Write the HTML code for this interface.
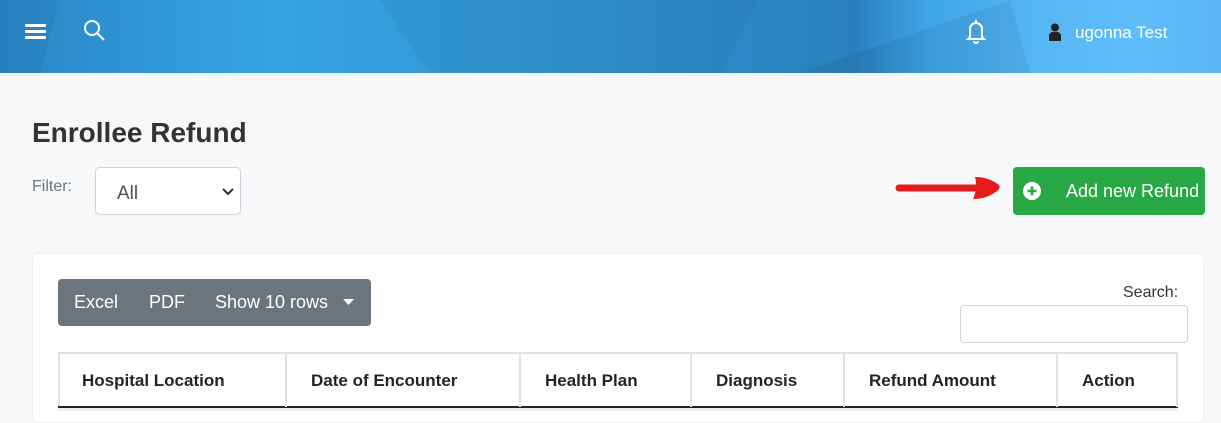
<!DOCTYPE html>
<html><head><meta charset="utf-8"><style>
*{box-sizing:border-box;margin:0;padding:0}
body{width:1221px;height:411px;overflow:hidden;background:#f7f8fa;font-family:"Liberation Sans",sans-serif;position:relative;color:#212529}
.top{position:absolute;left:0;top:0;width:1221px;height:73px;background:linear-gradient(90deg,#2a86c6 0%,#35a3e3 22%,#3399d6 38%,#2d8cc8 55%,#2a80bd 70%,#3ea5e6 76%,#55b6f4 85%,#60bdfb 93%,#58b5f2 100%);overflow:hidden}
.ab{position:absolute}
.th{position:absolute;top:352px;height:55px;border-right:2px solid #dee2e6;font-weight:bold;font-size:17px;line-height:58px;padding-left:24px}
</style></head><body>
<div class="top">
 <svg class="ab" style="left:0;top:0" width="1221" height="73">
  <polygon points="0,0 60,0 40,73 0,73" fill="#1f6fa8" opacity=".25"/>
  <polygon points="380,0 760,0 720,73 430,73" fill="#000" opacity=".04"/>
  <polygon points="800,73 1010,0 1030,73" fill="#000" opacity=".06"/>
 </svg>
 <svg class="ab" style="left:25px;top:23px" width="21" height="16"><rect y="1" width="21" height="3" rx="1" fill="#fff"/><rect y="7" width="21" height="3" rx="1" fill="#fff"/><rect y="13" width="21" height="3" rx="1" fill="#fff"/></svg>
 <svg class="ab" style="left:83px;top:19px" width="24" height="24" fill="none" stroke="#fff" stroke-width="2"><circle cx="9" cy="9" r="7"/><path d="M14 14l7 7"/></svg>
 <svg class="ab" style="left:964px;top:18px" width="24" height="27" fill="none" stroke="#fff" stroke-width="2"><path d="M12 2v2M6 19V11a6 6 0 0 1 12 0v8l2 2H4z"/><path d="M10 23a2 2 0 0 0 4 0"/></svg>
 <svg class="ab" style="left:1048px;top:23px" width="14" height="18" fill="#222"><circle cx="7" cy="4.5" r="4"/><path d="M1 18v-5a4 4 0 0 1 4-4h4a4 4 0 0 1 4 4v5z"/></svg>
 <div class="ab" style="left:1075px;top:23px;color:#fff;font-size:17px">ugonna Test</div>
</div>
<div class="ab" style="left:32px;top:117px;font-size:28px;font-weight:bold;color:#333">Enrollee Refund</div>
<div class="ab" style="left:32px;top:178px;font-size:16px;color:#6c757d">Filter:</div>
<div class="ab" style="left:95px;top:167px;width:146px;height:48px;background:#fff;border:1px solid #ced4da;border-radius:5px;font-size:19px;color:#495057;padding:15px 0 0 21px">All
 <svg class="ab" style="left:126px;top:20px" width="12" height="8" fill="none" stroke="#333" stroke-width="2"><path d="M1 1l5 5 5-5"/></svg></div>
<svg class="ab" style="left:895px;top:174px" width="110" height="28"><path d="M4 14h80" stroke="#e31b1b" stroke-width="7" stroke-linecap="round"/><path d="M80 3q14 0 24 8q2 3 -2 6q-10 8 -24 8q5 -11 2 -22z" fill="#e31b1b"/></svg>
<div class="ab" style="left:1013px;top:167px;width:192px;height:48px;background:#28a745;border-radius:4px;color:#fff;font-size:18px">
 <svg class="ab" style="left:10px;top:15px" width="18" height="18"><circle cx="9" cy="9" r="9" fill="#fff"/><path d="M9 4.5v9M4.5 9h9" stroke="#28a745" stroke-width="2.6"/></svg>
 <span class="ab" style="left:53px;top:14px">Add new Refund</span></div>
<div class="ab" style="left:32px;top:253px;width:1172px;height:170px;background:#fff;border-radius:4px;border:1px solid #eef0f2"></div>
<div class="ab" style="left:58px;top:279px;width:313px;height:47px;background:#6c757d;border-radius:4px;color:#fff;font-size:18px;line-height:47px">
 <span class="ab" style="left:16px">Excel</span><span class="ab" style="left:91px">PDF</span><span class="ab" style="left:157px">Show 10 rows</span>
 <svg class="ab" style="left:285px;top:20px" width="11" height="6"><path d="M0 0h11L5.5 6z" fill="#fff"/></svg></div>
<div class="ab" style="left:1123px;top:284px;font-size:16px;color:#333">Search:</div>
<div class="ab" style="left:960px;top:305px;width:228px;height:38px;background:#fff;border:1px solid #ced4da;border-radius:4px"></div>
<div class="ab" style="left:58px;top:352px;width:1120px;height:59px;border:2px solid #dee2e6;border-bottom:none"></div>
<div class="ab" style="left:58px;top:406px;width:1120px;height:2px;background:#222"></div>
<div class="ab" style="left:58px;top:408px;width:1120px;height:3px;background:#eceef0"></div>
<div class="th" style="left:58px;width:229px">Hospital Location</div>
<div class="th" style="left:287px;width:234px">Date of Encounter</div>
<div class="th" style="left:521px;width:171px">Health Plan</div>
<div class="th" style="left:692px;width:153px">Diagnosis</div>
<div class="th" style="left:845px;width:213px">Refund Amount</div>
<div class="th" style="left:1058px;width:120px">Action</div>
</body></html>
